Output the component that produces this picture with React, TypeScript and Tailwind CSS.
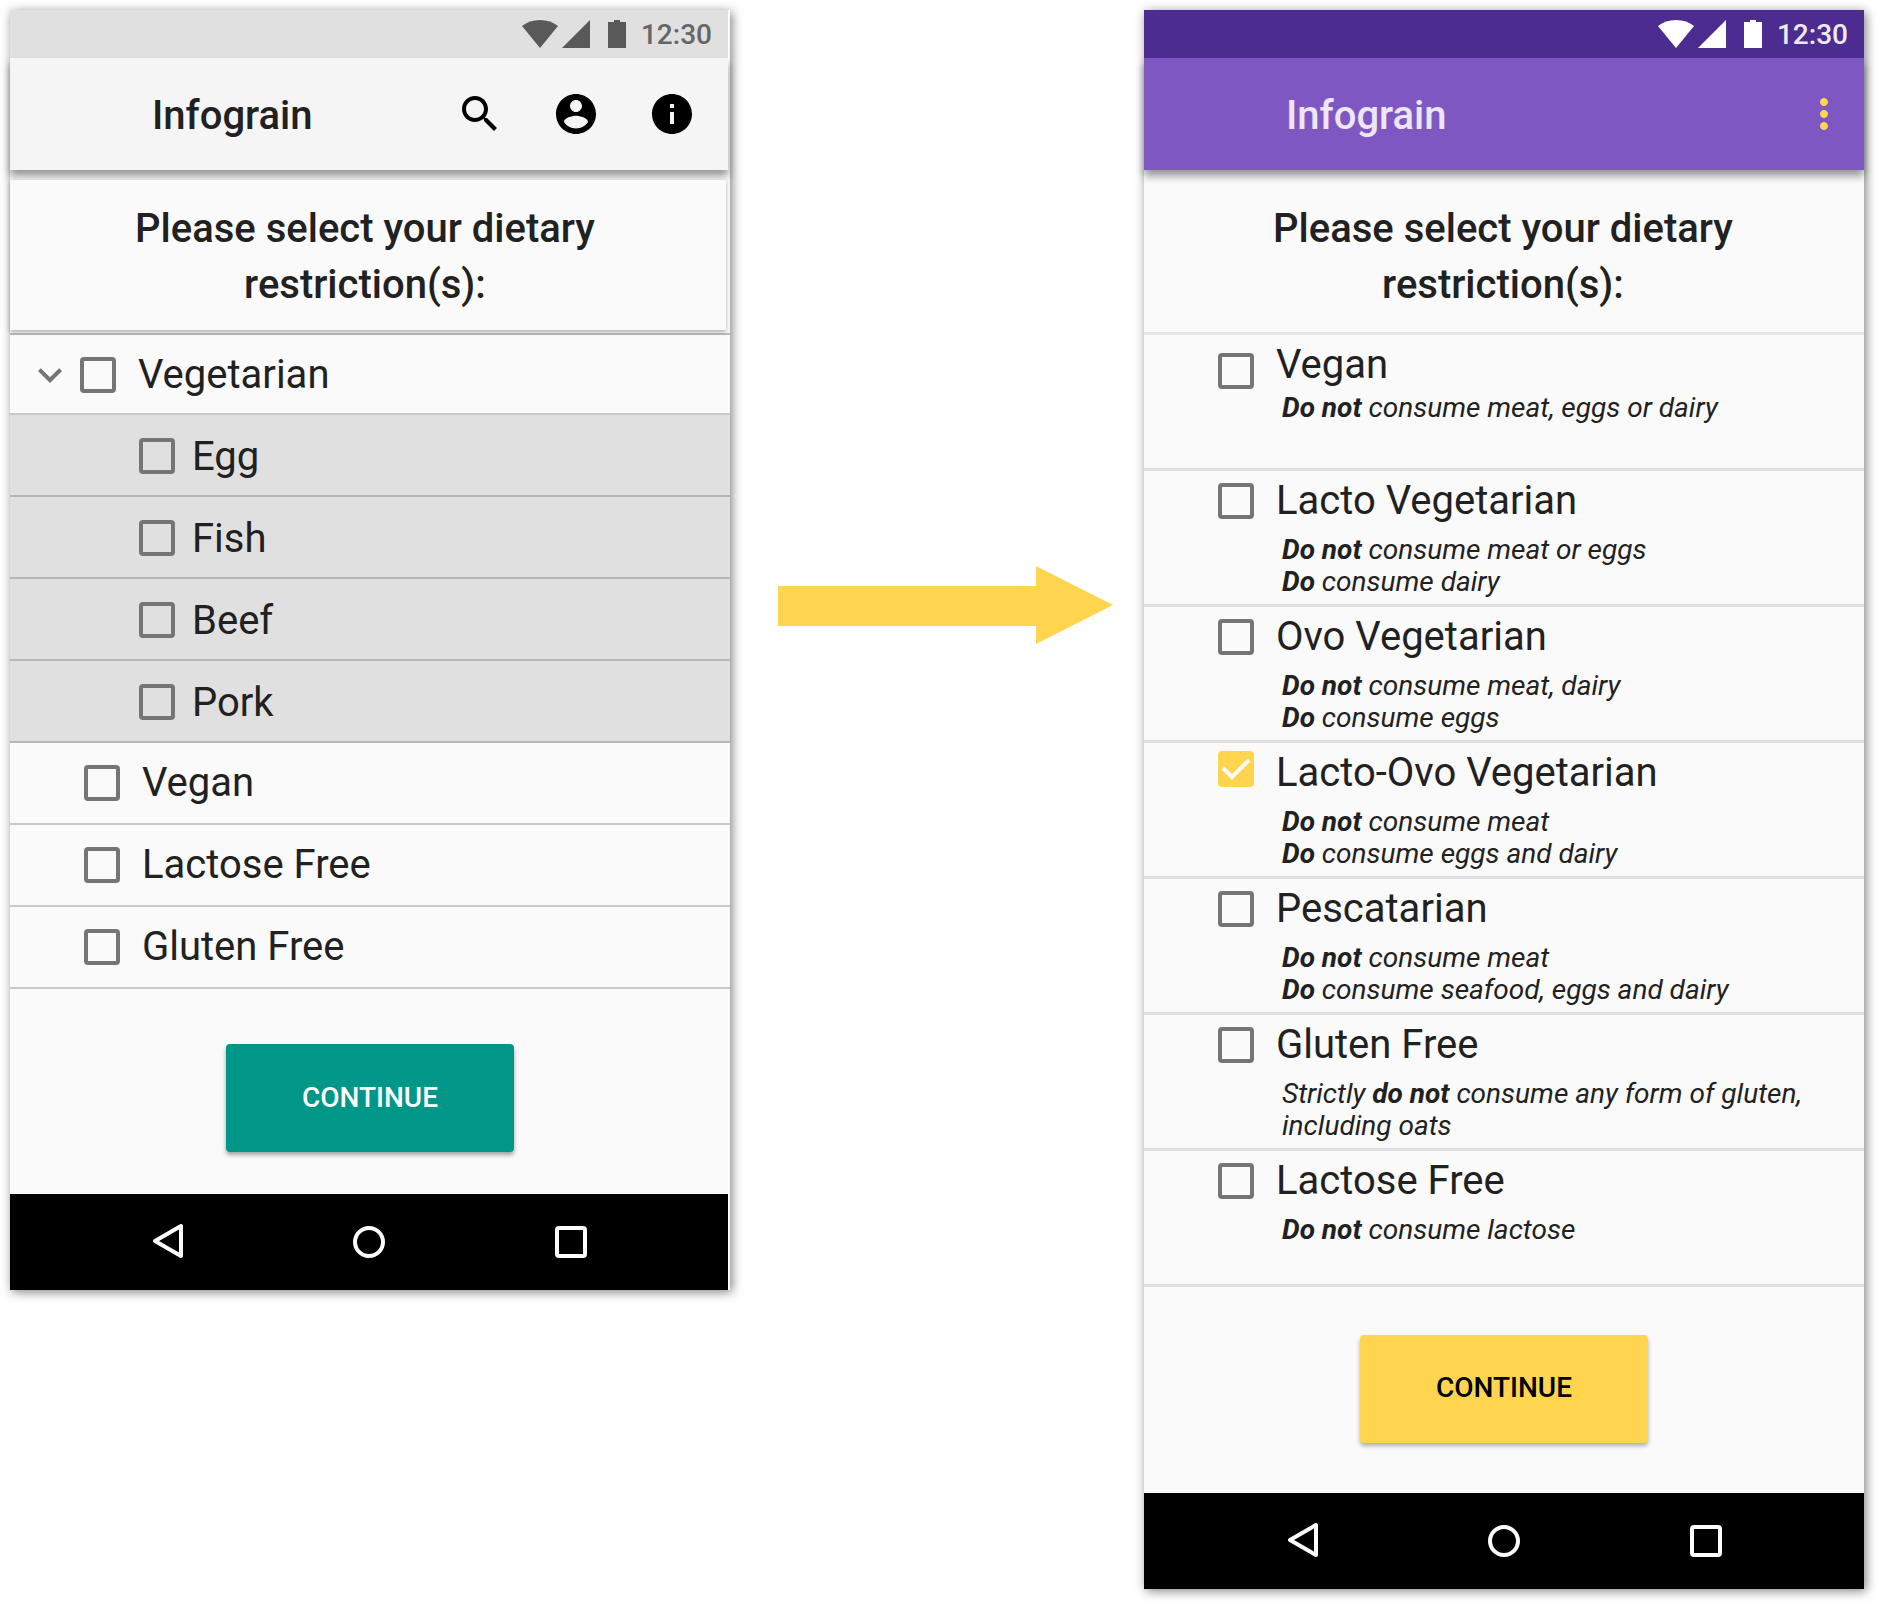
import React from "react";

type IconProps = { className?: string };

function WifiIcon({ className }: IconProps) {
  return (
    <svg viewBox="0 0 36 28" className={className} fill="currentColor" aria-hidden="true">
      <path d="M18 28 0 6C5 2 11 0 18 0s13 2 18 6z" />
    </svg>
  );
}

function SignalIcon({ className }: IconProps) {
  return (
    <svg viewBox="0 0 28 28" className={className} fill="currentColor" aria-hidden="true">
      <path d="M0 28h28V0z" />
    </svg>
  );
}

function BatteryIcon({ className }: IconProps) {
  return (
    <svg viewBox="0 0 18 28" className={className} fill="currentColor" aria-hidden="true">
      <path d="M0 2h6V0h6v2h6v26H0z" />
    </svg>
  );
}

function MaterialIcon({ d, className }: { d: string; className?: string }) {
  return (
    <svg viewBox="0 0 24 24" className={className ?? "size-12"} fill="currentColor" aria-hidden="true">
      <path d={d} />
    </svg>
  );
}

const SEARCH =
  "M15.5 14h-.79l-.28-.27C15.41 12.59 16 11.11 16 9.5 16 5.91 13.09 3 9.5 3S3 5.91 3 9.5 5.91 16 9.5 16c1.61 0 3.09-.59 4.23-1.57l.27.28v.79l5 4.99L20.49 19l-4.99-5zm-6 0C7.01 14 5 11.99 5 9.5S7.01 5 9.5 5 14 7.01 14 9.5 11.99 14 9.5 14z";
const ACCOUNT =
  "M12 2C6.48 2 2 6.48 2 12s4.48 10 10 10 10-4.48 10-10S17.52 2 12 2zm0 3c1.66 0 3 1.34 3 3s-1.34 3-3 3-3-1.34-3-3 1.34-3 3-3zm0 14.2c-2.5 0-4.71-1.28-6-3.22.03-1.99 4-3.08 6-3.08 1.99 0 5.97 1.09 6 3.08-1.29 1.94-3.5 3.22-6 3.22z";
const INFO =
  "M12 2C6.48 2 2 6.48 2 12s4.48 10 10 10 10-4.48 10-10S17.52 2 12 2zm1 15h-2v-6h2v6zm0-8h-2V7h2v2z";
const MORE =
  "M12 8c1.1 0 2-.9 2-2s-.9-2-2-2-2 .9-2 2 .9 2 2 2zm0 2c-1.1 0-2 .9-2 2s.9 2 2 2 2-.9 2-2-.9-2-2-2zm0 6c-1.1 0-2 .9-2 2s.9 2 2 2 2-.9 2-2-.9-2-2-2z";
const EXPAND = "M16.59 8.59L12 13.17 7.41 8.59 6 10l6 6 6-6z";

function StatusBar({ className }: { className: string }) {
  return (
    <div className={`flex h-12 items-center justify-end pr-4 ${className}`}>
      <WifiIcon className="h-7 w-9" />
      <SignalIcon className="ml-1 size-7" />
      <BatteryIcon className="ml-[18px] h-7 w-[18px]" />
      <span className="ml-[15px] pt-0.5 text-[28px] leading-8 font-medium opacity-90">12:30</span>
    </div>
  );
}

function IconButton({ label, d }: { label: string; d: string }) {
  return (
    <button type="button" aria-label={label} className="size-12">
      <MaterialIcon d={d} />
    </button>
  );
}

function NavBar() {
  return (
    <nav className="flex h-24 items-center justify-center gap-[154px] bg-black text-white">
      <button type="button" aria-label="Back" className="size-12">
        <svg viewBox="0 0 48 48" className="size-12" fill="none" stroke="currentColor" strokeWidth="4" strokeLinejoin="round" aria-hidden="true">
          <path d="M38 8v30L12 23z" />
        </svg>
      </button>
      <button type="button" aria-label="Home" className="size-12">
        <svg viewBox="0 0 48 48" className="size-12" fill="none" stroke="currentColor" strokeWidth="4" aria-hidden="true">
          <circle cx="24" cy="24" r="14" />
        </svg>
      </button>
      <button type="button" aria-label="Recent apps" className="size-12">
        <svg viewBox="0 0 48 48" className="size-12" fill="none" stroke="currentColor" strokeWidth="4" aria-hidden="true">
          <rect x="10" y="10" width="28" height="28" rx="2" />
        </svg>
      </button>
    </nav>
  );
}

function Checkbox({ id, checked = false }: { id: string; checked?: boolean }) {
  return (
    <span className="grid size-9 shrink-0">
      <input
        id={id}
        type="checkbox"
        defaultChecked={checked}
        className="peer col-start-1 row-start-1 size-9 appearance-none rounded border-4 border-[#757575] checked:border-[#ffd54f] checked:bg-[#ffd54f]"
      />
      <svg
        viewBox="0 0 36 36"
        className="pointer-events-none invisible col-start-1 row-start-1 size-9 peer-checked:visible"
        fill="none"
        stroke="#fafafa"
        strokeWidth="4"
        aria-hidden="true"
      >
        <path d="M5 17 14 26 31 9" />
      </svg>
    </span>
  );
}

function Heading({ className }: { className: string }) {
  return (
    <h2 className={`text-center text-[40px] leading-[56px] font-medium ${className}`}>
      Please select your dietary
      <br />
      restriction(s):
    </h2>
  );
}

const CARD = "bg-[#fafafa] text-[#212121] shadow-[2px_2px_10px_rgba(0,0,0,0.5)]";

function BeforePhone() {
  const meats = ["Egg", "Fish", "Beef", "Pork"];
  const others = ["Vegan", "Lactose Free", "Gluten Free"];
  return (
    <section className={CARD}>
      <div className="pr-0.5">
        <StatusBar className="bg-[#e0e0e0] text-[#595959]" />
        <header className="flex h-28 items-center bg-[#f5f5f5] pr-8 pl-[142px] shadow-[0_6px_8px_rgba(0,0,0,0.4)]">
          <h1 className="flex-1 pt-1 text-[40px] leading-[48px] font-medium">Infograin</h1>
          <div className="flex gap-12 text-black">
            <IconButton label="Search" d={SEARCH} />
            <IconButton label="Account" d={ACCOUNT} />
            <IconButton label="Information" d={INFO} />
          </div>
        </header>
      </div>
      <div className="pt-2.5 pr-1">
        <Heading className="relative h-[150px] bg-[#fafafa] pt-[21px] pr-1.5 shadow-[0_2px_4px_rgba(0,0,0,0.3)]" />
      </div>
      <ul className="mt-[3px] border-t-2 border-[#bdbdbd] text-[40px] leading-[48px]">
        <li className="flex h-20 items-center border-b-2 border-[#c8c8c8] pt-0.5 pl-4">
          <button type="button" aria-label="Collapse Vegetarian" className="size-12 text-[#757575]">
            <MaterialIcon d={EXPAND} />
          </button>
          <span className="ml-1.5 flex items-center">
            <Checkbox id="before-vegetarian" />
            <label htmlFor="before-vegetarian" className="pl-[22px]">Vegetarian</label>
          </span>
        </li>
        {meats.map((name) => (
          <li key={name} className="flex h-[82px] items-center border-b-2 border-[#b6b6b6] bg-[#e0e0e0] pt-0.5 pl-[129px]">
            <Checkbox id={`before-${name}`} />
            <label htmlFor={`before-${name}`} className="pt-0.5 pl-[17px]">{name}</label>
          </li>
        ))}
        {others.map((name) => (
          <li key={name} className="flex h-[82px] items-center border-b-2 border-[#c8c8c8] pl-[74px]">
            <Checkbox id={`before-${name}`} />
            <label htmlFor={`before-${name}`} className="pl-[22px]">{name}</label>
          </li>
        ))}
      </ul>
      <div className="flex justify-center pt-[55px] pb-[42px]">
        <button
          type="button"
          className="h-[108px] w-72 rounded bg-[#009688] text-[28px] leading-8 font-medium text-white shadow-[0_3px_4px_rgba(0,0,0,0.35)]"
        >
          CONTINUE
        </button>
      </div>
      <div className="pr-0.5">
        <NavBar />
      </div>
    </section>
  );
}

type Diet = { name: string; lines: React.ReactNode[]; checked?: boolean; compact?: boolean };

const DIETS: Diet[] = [
  { name: "Vegan", compact: true, lines: [<><b>Do not</b> consume meat, eggs or dairy</>] },
  { name: "Lacto Vegetarian", lines: [<><b>Do not</b> consume meat or eggs</>, <><b>Do</b> consume dairy</>] },
  { name: "Ovo Vegetarian", lines: [<><b>Do not</b> consume meat, dairy</>, <><b>Do</b> consume eggs</>] },
  {
    name: "Lacto-Ovo Vegetarian",
    checked: true,
    lines: [<><b>Do not</b> consume meat</>, <><b>Do</b> consume eggs and dairy</>],
  },
  { name: "Pescatarian", lines: [<><b>Do not</b> consume meat</>, <><b>Do</b> consume seafood, eggs and dairy</>] },
  { name: "Gluten Free", lines: [<>Strictly <b>do not</b> consume any form of gluten,</>, <>including oats</>] },
  { name: "Lactose Free", lines: [<><b>Do not</b> consume lactose</>] },
];

function AfterPhone() {
  return (
    <section className={CARD}>
      <StatusBar className="bg-[#4d2c91] text-white" />
      <header className="flex h-28 items-center bg-[#7e57c2] pr-4 pl-[142px] shadow-[0_6px_8px_rgba(0,0,0,0.4)]">
        <h1 className="flex-1 pt-1 text-[40px] leading-[48px] font-medium text-white/85">Infograin</h1>
        <div className="flex text-[#ffd54f]">
          <IconButton label="More options" d={MORE} />
        </div>
      </header>
      <Heading className="h-[162px] pt-[31px] pr-0.5" />
      <ul className="border-t-3 border-[#e6e6e6]">
        {DIETS.map((diet) => {
          const id = `after-${diet.name}`;
          const boxTop = diet.checked ? "pt-2" : diet.compact ? "pt-[18px]" : "pt-3";
          return (
            <li key={diet.name} className="flex h-[136px] border-b-3 border-[#dfdfdf] pl-[74px]">
              <div className={boxTop}>
                <Checkbox id={id} checked={diet.checked} />
              </div>
              <div className="flex-1 pt-1.5 pl-[22px]">
                <label htmlFor={id} className="block text-[40px] leading-[48px]">{diet.name}</label>
                <div className={`pr-10 pl-1.5 text-[28px] leading-8 italic ${diet.compact ? "pt-[3px]" : "pt-[9px]"}`}>
                  {diet.lines.map((line, i) => (
                    <p key={i}>{line}</p>
                  ))}
                </div>
              </div>
            </li>
          );
        })}
      </ul>
      <div className="flex justify-center pt-12 pb-[50px]">
        <button
          type="button"
          className="h-[108px] w-72 rounded bg-[#ffd54f] pb-0.5 text-[28px] leading-8 font-medium text-black shadow-[0_3px_4px_rgba(0,0,0,0.3)]"
        >
          CONTINUE
        </button>
      </div>
      <NavBar />
    </section>
  );
}

export default function App() {
  return (
    <main className="grid min-h-screen grid-cols-[720fr_414fr_720fr] items-start bg-white pt-2.5 pr-3.5 pb-3.5 pl-2.5 font-['Roboto',sans-serif]">
      <BeforePhone />
      <div className="pt-[556px] pr-[31px] pl-12">
        <svg viewBox="0 0 335 78" className="w-full" fill="#ffd54f" aria-hidden="true">
          <path d="M0 20h258V0l77 39-77 39V60H0z" />
        </svg>
      </div>
      <AfterPhone />
    </main>
  );
}
